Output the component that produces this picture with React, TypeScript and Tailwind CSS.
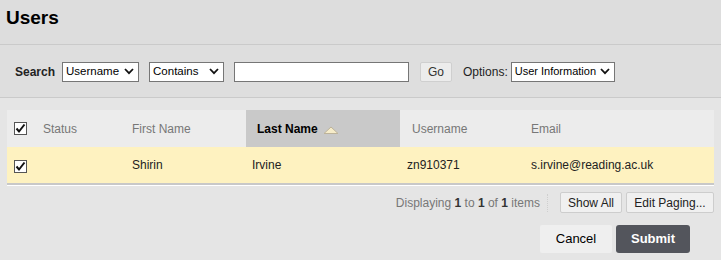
import React from "react";

const Chevron = () => (
    <svg width="10" height="7" viewBox="0 0 10 7" className="shrink-0">
        <path d="M1 1 L5 5.2 L9 1" fill="none" stroke="#111" strokeWidth="1.8" />
    </svg>
);

const FakeSelect = ({ label, w, size = "text-[11.5px]" }: { label: string; w: string; size?: string }) => (
    <div className={`${w} ${size} shrink-0 h-[20px] bg-white border border-[#767676] flex items-center justify-between pl-[3px] pr-[4px] text-black whitespace-nowrap`}>
        <span>{label}</span>
        <Chevron />
    </div>
);

const Check = () => (
    <div className="w-[13px] h-[13px] border border-[#555] bg-white flex items-center justify-center">
        <svg width="11" height="11" viewBox="0 0 11 11">
            <path d="M1.5 5.5 L4 8.5 L9.5 1.5" fill="none" stroke="#111" strokeWidth="2" />
        </svg>
    </div>
);

export default function App() {
    return (
        <div className="w-[721px] h-[260px] bg-[#e5e5e5] font-['Liberation_Sans',Arial,sans-serif] overflow-hidden">
            <div className="h-[44px] bg-[#dddddd] pl-[6px] pt-[5px]">
                <h1 className="text-[19px] font-bold text-black leading-[26px]">Users</h1>
            </div>
            <div className="h-[54px] bg-[#dedede] border-t border-b border-[#cacaca] flex items-center pl-[15px] pt-[1px]">
                <span className="text-[12px] font-bold text-[#222] mr-[7px]">Search</span>
                <FakeSelect label="Username" w="w-[77px]" />
                <div className="w-[10px]" />
                <FakeSelect label="Contains" w="w-[75px]" />
                <div className="w-[10px]" />
                <div className="w-[175px] shrink-0 h-[20px] bg-white border border-[#767676]" />
                <button className="ml-[11px] w-[32px] h-[20px] bg-[#ececec] border border-[#cfcfcf] rounded-[2px] text-[12px] text-[#333]">Go</button>
                <span className="ml-[11px] text-[12px] text-[#222] mr-[3px] whitespace-nowrap">Options:</span>
                <FakeSelect label="User Information" w="w-[104px]" size="text-[11px]" />
            </div>

            <div className="mt-[12px] mx-[7px] w-[707px]">
                <div className="flex h-[37px] bg-[#ececec] text-[12px] text-[#777]">
                    <div className="w-[29px] pl-[7px] flex items-center"><Check /></div>
                    <div className="w-[89px] pl-[7px] flex items-center">Status</div>
                    <div className="w-[121px] pl-[7px] flex items-center">First Name</div>
                    <div className="w-[154px] pl-[11px] flex items-center bg-[#c9c9c9] text-black font-bold gap-[5px]">
                        Last Name
                        <svg width="16" height="8" viewBox="0 0 16 8" className="mt-[2px]">
                            <path d="M1 7.5 L8 1 L15 7.5 Z" fill="#f6ecc9" stroke="#bdb39a" strokeWidth="1" />
                        </svg>
                    </div>
                    <div className="w-[120px] pl-[12px] flex items-center">Username</div>
                    <div className="flex-1 pl-[11px] flex items-center">Email</div>
                </div>
                <div className="flex h-[36px] bg-[#fef2c0] text-[12px] text-[#222]">
                    <div className="w-[29px] pl-[7px] flex items-center pt-[3px]"><Check /></div>
                    <div className="w-[89px]" />
                    <div className="w-[121px] pl-[7px] flex items-center">Shirin</div>
                    <div className="w-[154px] pl-[6px] flex items-center">Irvine</div>
                    <div className="w-[120px] pl-[7px] flex items-center">zn910371</div>
                    <div className="flex-1 pl-[11px] flex items-center">s.irvine@reading.ac.uk</div>
                </div>
                <div className="h-[2px] bg-[#c8c8c8]" />
                <div className="h-[1px] bg-white" />
            </div>

            <div className="flex items-center justify-end mt-[6px] pr-[7px] text-[12px]">
                <span className="text-[#777]">
                    Displaying <b className="text-[#333]">1</b> to <b className="text-[#333]">1</b> of <b className="text-[#333]">1</b> items
                </span>
                <div className="ml-[7px] mr-[12px] h-[18px] border-l border-dotted border-[#cfcfcf]" />
                <button className="w-[62px] h-[21px] bg-[#f0f0f0] border border-[#cdcdcd] rounded-[2px] text-[#222]">Show All</button>
                <button className="ml-[4px] w-[88px] h-[21px] bg-[#f0f0f0] border border-[#cdcdcd] rounded-[2px] text-[#222]">Edit Paging...</button>
            </div>

            <div className="flex justify-end mt-[12px] pr-[31px] gap-[4px] text-[13px]">
                <button className="w-[72px] h-[28px] bg-[#efefef] rounded-[2px] text-black">Cancel</button>
                <button className="w-[74px] h-[28px] bg-[#53555c] rounded-[3px] text-white font-bold">Submit</button>
            </div>
        </div>
    );
}
